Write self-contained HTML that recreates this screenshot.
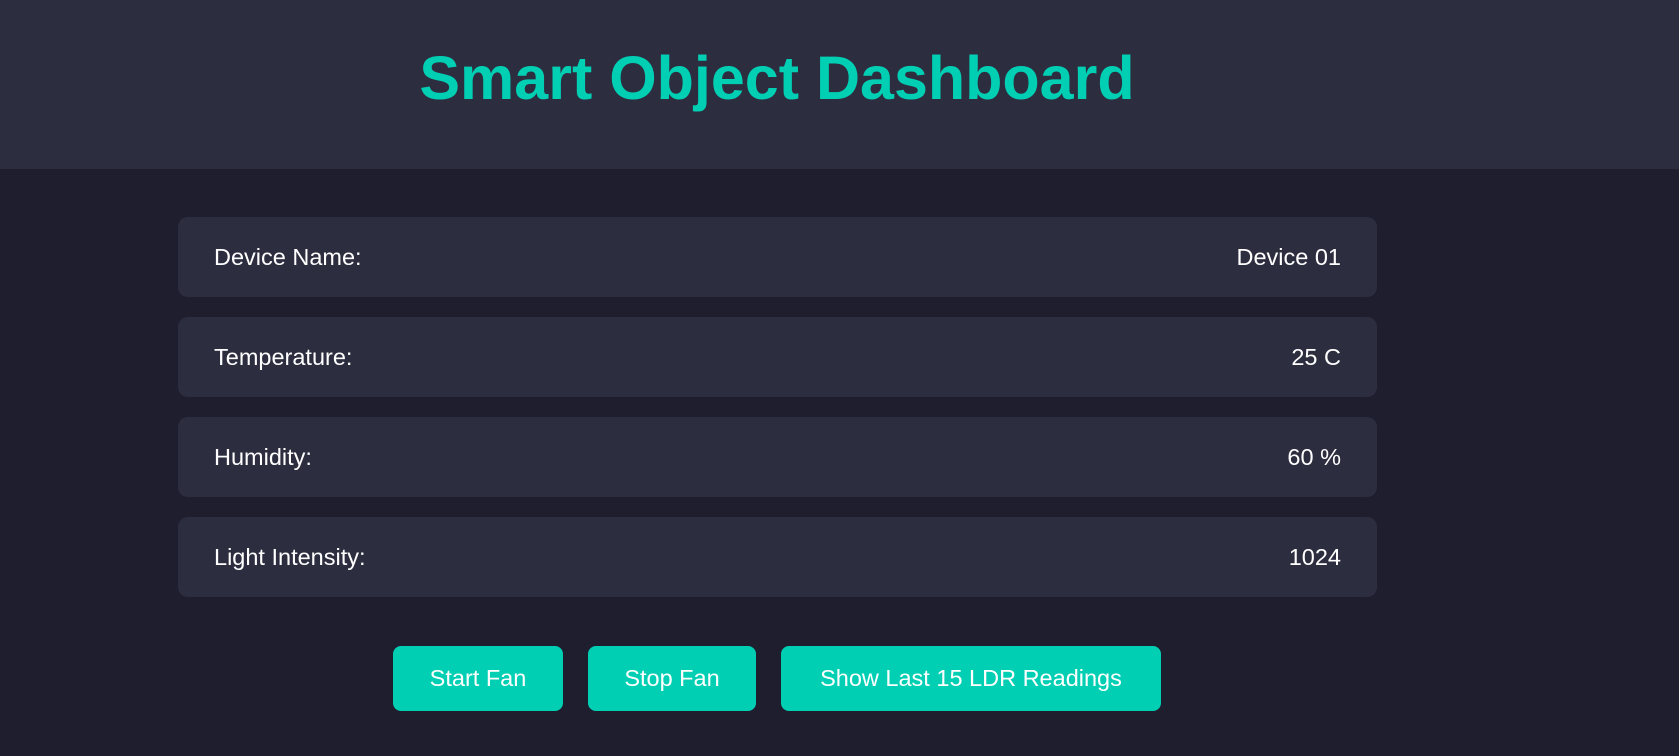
<!DOCTYPE html>
<html><head><meta charset="utf-8"><style>
html,body{margin:0;padding:0;}
body{width:1679px;height:756px;background:#1e1e2f;font-family:"Liberation Sans",Arial,sans-serif;position:relative;overflow:hidden;color:#fff;}
.hdr{position:absolute;left:0;top:0;width:1679px;height:169px;background:#2d2d40;}
.hdr h1{position:absolute;left:277px;width:1000px;top:0;margin:0;line-height:156px;text-align:center;font-size:61px;font-weight:bold;color:#00cfb4;}
.card{position:absolute;left:178px;width:1199px;height:80px;background:#2d2d40;border-radius:10px;font-size:23.5px;line-height:80px;}
.card .l{position:absolute;left:36px;}
.card .r{position:absolute;right:36px;}
.btn{position:absolute;top:646px;height:65px;background:#00cfb4;border-radius:8px;color:#fff;font-size:23.5px;line-height:65px;text-align:center;}
</style></head><body>
<div class="hdr"><h1>Smart Object Dashboard</h1></div>
<div class="card" style="top:217px"><span class="l">Device Name:</span><span class="r">Device 01</span></div>
<div class="card" style="top:317px"><span class="l">Temperature:</span><span class="r">25 C</span></div>
<div class="card" style="top:417px"><span class="l">Humidity:</span><span class="r">60 %</span></div>
<div class="card" style="top:517px"><span class="l">Light Intensity:</span><span class="r">1024</span></div>
<div class="btn" style="left:393px;width:170px">Start Fan</div>
<div class="btn" style="left:588px;width:168px">Stop Fan</div>
<div class="btn" style="left:781px;width:380px">Show Last 15 LDR Readings</div>
</body></html>
